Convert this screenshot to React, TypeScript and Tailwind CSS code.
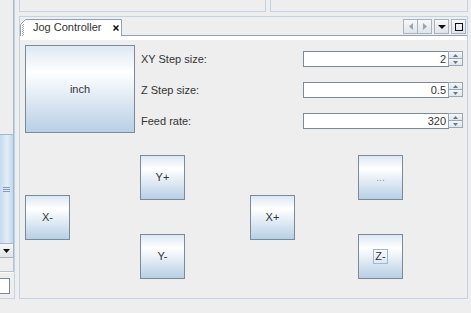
import React from "react";

const btnCls =
  "flex items-center justify-center border border-[#7a8a99] bg-[linear-gradient(to_bottom,#dde8f3_0%,#ffffff_30%,#b8cfe5_100%)] text-[11px] text-[#333333]";

function JogButton({ children }: { children: React.ReactNode }) {
  return <div className={`${btnCls} w-[45px] h-[45px]`}>{children}</div>;
}

function Arrow({ up }: { up?: boolean }) {
  return (
    <svg width="5" height="3" viewBox="0 0 5 3">
      <path d={up ? "M2.5 0 L5 3 H0 Z" : "M0 0 H5 L2.5 3 Z"} fill="#6b7580" />
    </svg>
  );
}

function Spinner({ value }: { value: string }) {
  return (
    <div className="flex h-[16px] w-[160px]">
      <div className="w-[146px] bg-white border border-[#7a8a99] flex items-center justify-end pr-[2px] text-[11px] text-[#333333] leading-none">
        {value}
      </div>
      <div className="-ml-px w-[15px] flex flex-col">
        <div className="h-[8px] border border-[#9aa6b2] bg-[linear-gradient(to_bottom,#f4f7fb,#dde6ef)] flex items-center justify-center">
          <Arrow up />
        </div>
        <div className="h-[8px] -mt-px border border-[#9aa6b2] bg-[linear-gradient(to_bottom,#f4f7fb,#dde6ef)] flex items-center justify-center">
          <Arrow />
        </div>
      </div>
    </div>
  );
}

function NavButton({ children, className = "" }: { children: React.ReactNode; className?: string }) {
  return (
    <div
      className={`w-[15px] h-[15px] border border-[#a9b3bd] bg-[linear-gradient(to_bottom,#f6f8fa,#dfe5ea)] flex items-center justify-center ${className}`}
    >
      {children}
    </div>
  );
}

function LeftStrip() {
  return (
    <div className="w-[15px] h-[299px] shrink-0 border-r border-b border-[#c2d3e3] flex flex-col">
      <div className="w-[14px] h-[272px] flex flex-col">
        <div className="h-[134px] bg-[#eeeeee] border-r border-[#aab7c4]" />
        <div className="h-[110px] border-y border-r border-[#9fb8d6] bg-[linear-gradient(to_right,#c6d9ef,#e3edf8_55%,#c4d7ee)] flex flex-col items-center justify-center gap-[1px]">
          <div className="w-[7px] h-px bg-[#7f9cc2]" />
          <div className="w-[7px] h-px bg-[#7f9cc2]" />
          <div className="w-[7px] h-px bg-[#7f9cc2]" />
        </div>
        <div className="h-[14px] border-r border-b border-[#a9b3bd] bg-[linear-gradient(to_bottom,#f6f8fa,#dfe5ea)] flex items-center justify-center">
          <svg width="7" height="4" viewBox="0 0 7 4">
            <path d="M0 0 H7 L3.5 4 Z" fill="#111111" />
          </svg>
        </div>
        <div className="h-[14px] border-r border-b border-[#b8c2cc] bg-[#eeeeee]" />
      </div>
      <div className="flex-1 border-t border-[#fafafa] pt-[5px]">
        <div className="w-[10px] h-[16px] bg-white border-y border-r border-[#7a8a99]" />
      </div>
    </div>
  );
}

function Tab() {
  return (
    <div className="relative w-[102px] h-[17px] bg-white [clip-path:polygon(0_5px,5px_0,100%_0,100%_100%,0_100%)] flex items-center">
      <svg className="absolute inset-0" width="102" height="17" viewBox="0 0 102 17">
        <path d="M0.5 17 V5.5 L5.5 0.5 H101.5 V17" fill="none" stroke="#8fa3b6" />
        {[6, 8, 10, 12, 14, 16].map((y) => (
          <g key={y} fill="#a2a9b6">
            <rect x="2" y={y} width="1" height="1" />
            <rect x="3" y={y - 1} width="1" height="1" />
          </g>
        ))}
      </svg>
      <span className="ml-[13px] text-[11px] text-[#333333] leading-none">Jog Controller</span>
      <svg className="ml-[12px]" width="6" height="6" viewBox="0 0 6 6">
        <path d="M0.5 0.5 L5.5 5.5 M5.5 0.5 L0.5 5.5" stroke="#111111" strokeWidth="1.5" />
      </svg>
    </div>
  );
}

export default function App() {
  return (
    <div className="w-[471px] h-[313px] bg-[#eeeeee] flex overflow-hidden font-['Liberation_Sans',Arial,sans-serif] text-[11px] text-[#333333]">
      <LeftStrip />
      <div className="ml-[4px] w-[449px] flex flex-col">
        <div className="flex h-[12px]">
          <div className="w-[247px] border-x border-b border-[#c2d3e3]" />
          <div className="ml-[4px] w-[198px] border-x border-b border-[#c2d3e3]" />
        </div>

        <div className="mt-[4px] h-[283px] border border-[#c2d3e3] flex flex-col">
          <div className="h-[19px] flex items-end">
            <Tab />
            <div className="flex-1 self-stretch border-b border-[#8fa3b6] flex justify-end pt-[2px] pr-[1px]">
              <NavButton>
                <svg width="4" height="7" viewBox="0 0 4 7">
                  <path d="M4 0 V7 L0 3.5 Z" fill="#9aa4ae" />
                </svg>
              </NavButton>
              <NavButton className="-ml-px">
                <svg width="4" height="7" viewBox="0 0 4 7">
                  <path d="M0 0 V7 L4 3.5 Z" fill="#9aa4ae" />
                </svg>
              </NavButton>
              <NavButton className="ml-[2px] border-[#7a8a99]">
                <svg width="8" height="4" viewBox="0 0 8 4">
                  <path d="M0 0 H8 L4 4 Z" fill="#111111" />
                </svg>
              </NavButton>
              <NavButton className="ml-[2px] border-[#7a8a99]">
                <div className="w-[8px] h-[8px] border-[1.5px] border-[#111111]" />
              </NavButton>
            </div>
          </div>
          <div className="h-[4px] bg-white" />

          <div className="flex-1 pl-[5px] pt-[5px] pr-[4px] flex flex-col">
            <div className="flex">
              <div className={`${btnCls} w-[110px] h-[88px]`}>inch</div>
              <div className="ml-[6px] flex-1 flex flex-col pt-[6px] gap-[15px]">
                {[
                  ["XY Step size:", "2"],
                  ["Z Step size:", "0.5"],
                  ["Feed rate:", "320"],
                ].map(([label, value]) => (
                  <div key={label} className="h-[16px] flex items-center justify-between">
                    <span className="leading-none">{label}</span>
                    <Spinner value={value} />
                  </div>
                ))}
              </div>
            </div>

            <div className="mt-[22px] h-[124px] flex">
              <div className="flex items-center">
                <JogButton>X-</JogButton>
              </div>
              <div className="ml-[70px] flex flex-col justify-between">
                <JogButton>Y+</JogButton>
                <JogButton>Y-</JogButton>
              </div>
              <div className="ml-[65px] flex items-center">
                <JogButton>X+</JogButton>
              </div>
              <div className="ml-[63px] flex flex-col justify-between">
                <JogButton>
                  <span className="text-[#8d93a3] text-[10px]">...</span>
                </JogButton>
                <JogButton>
                  <span className="border border-[#a3b8cc] px-px leading-[13px]">Z-</span>
                </JogButton>
              </div>
            </div>
          </div>
        </div>
      </div>
    </div>
  );
}
